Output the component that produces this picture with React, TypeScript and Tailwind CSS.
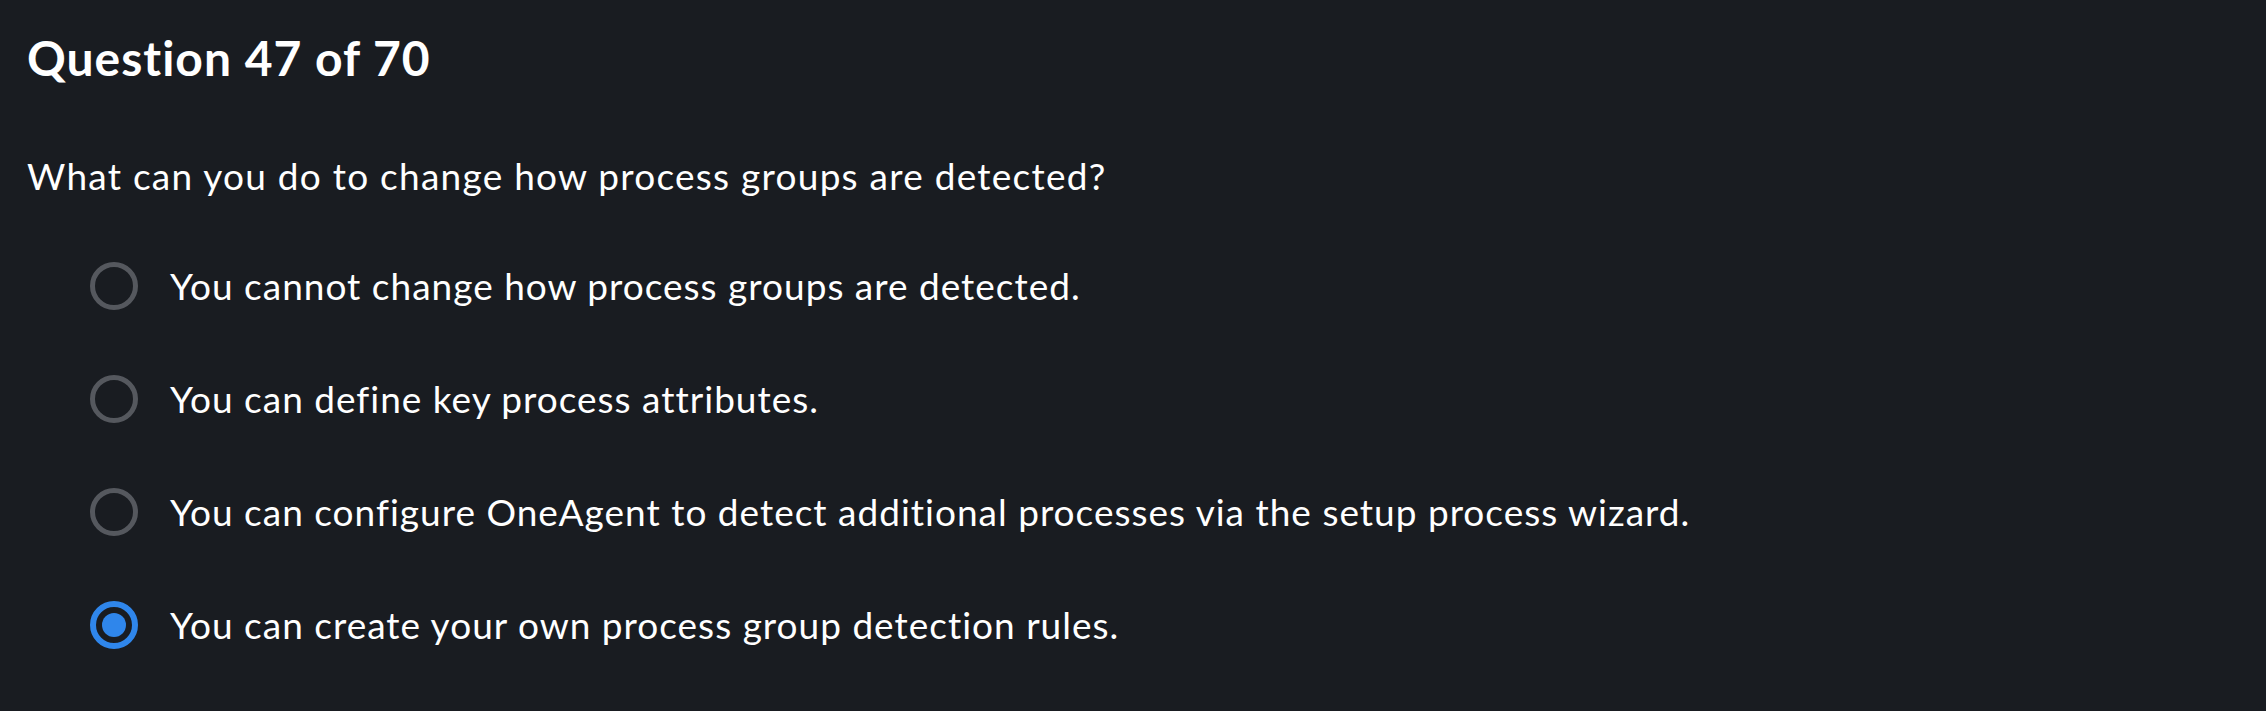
import React from "react";

const options = [
  "You cannot change how process groups are detected.",
  "You can define key process attributes.",
  "You can configure OneAgent to detect additional processes via the setup process wizard.",
  "You can create your own process group detection rules.",
];

export default function App() {
  const selected = 3;
  return (
    <div
      className="w-[2266px] h-[711px] bg-[#191c21] text-white pl-[27px] pt-[26px] [font-variant-ligatures:none]"
      style={{ fontFamily: "Lato, 'Noto Sans', sans-serif" }}
    >
      <h1 className="text-[48px] leading-[64px] font-bold tracking-[1px]">Question 47 of 70</h1>
      <p className="mt-[60px] text-[37px] leading-[52px] font-normal tracking-[1.25px] text-white">
        What can you do to change how process groups are detected?
      </p>
      <div className="mt-[56px] flex flex-col gap-[57px] pl-[63px]">
        {options.map((o, i) => (
          <div key={i} className="flex items-center h-[56px] gap-[32px]">
            {i === selected ? (
              <span className="w-[48px] h-[48px] rounded-full border-[6px] border-[#2f86eb] flex items-center justify-center shrink-0">
                <span className="w-[24px] h-[24px] rounded-full bg-[#2f86eb]" />
              </span>
            ) : (
              <span className="w-[48px] h-[48px] rounded-full border-[5px] border-[#55585e] shrink-0" />
            )}
            <span className="text-[37px] leading-[52px] font-normal tracking-[1px] text-white">{o}</span>
          </div>
        ))}
      </div>
    </div>
  );
}
